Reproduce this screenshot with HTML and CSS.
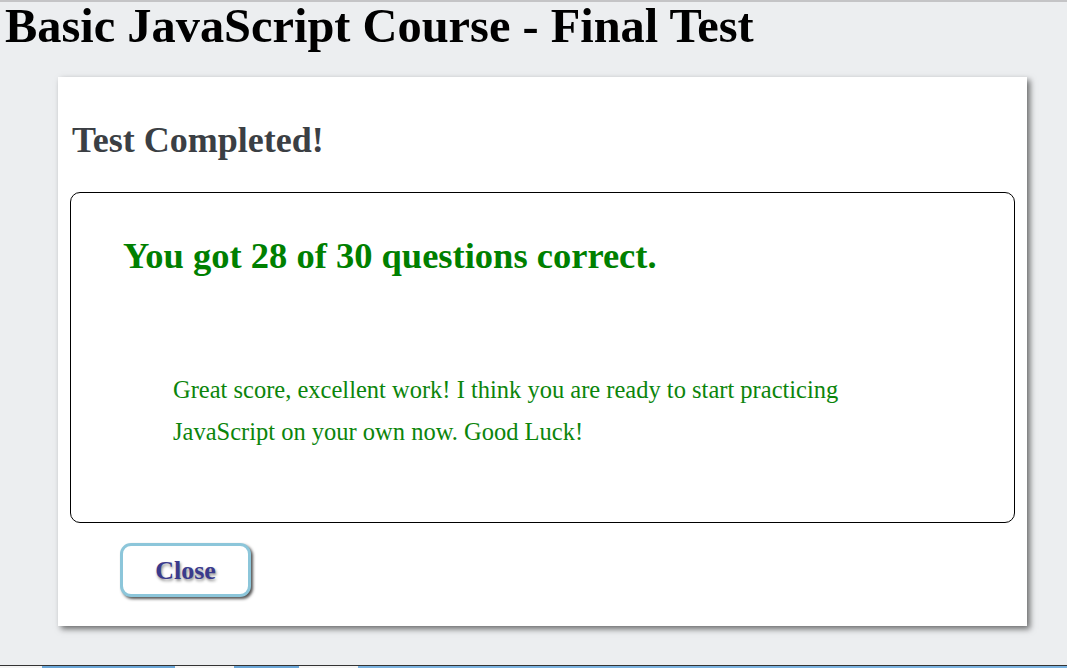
FILE: index.html
```html
<!DOCTYPE html>
<html>
<head>
<meta charset="utf-8">
<link rel="stylesheet" href="styles.css">
</head>
<body>
<div class="page">
  <h1 class="title">Basic JavaScript Course - Final Test</h1>
  <div class="card">
    <h2 class="card-title">Test Completed!</h2>
    <div class="result-box">
      <h3 class="score">You got 28 of 30 questions correct.</h3>
      <p class="message">Great score, excellent work! I think you are ready to start practicing JavaScript on your own now. Good Luck!</p>
    </div>
    <div class="actions">
      <button class="close-btn">Close</button>
    </div>
  </div>
</div>
<div class="taskbar">
  <span class="tb tb-a"></span><span class="tb tb-b"></span><span class="tb tb-c"></span><span class="tb tb-d"></span><span class="tb tb-e"></span><span class="tb tb-f"></span>
</div>
</body>
</html>
```
FILE: styles.css
```css
html, body {
  margin: 0;
  padding: 0;
}
body {
  background: #eceef0;
  font-family: "Liberation Serif", "Times New Roman", serif;
  height: 668px;
  display: flex;
  flex-direction: column;
  border-top: 2px solid #c4c4c6;
  box-sizing: border-box;
  overflow: hidden;
}
.page {
  flex: 1;
}
.title {
  margin: 0;
  padding: 0 0 0 5px;
  font-size: 48.4px;
  line-height: 48px;
  font-weight: bold;
  color: #000;
}
.card {
  margin: 27px 40px 0 58px;
  width: 969px;
  height: 549px;
  box-sizing: border-box;
  background: #fff;
  box-shadow: 3px 3px 6px rgba(0,0,0,0.55);
  padding: 43px 12px 0 12px;
}
.card-title {
  margin: 0 0 0 2px;
  font-size: 36px;
  line-height: 40px;
  color: #3b3f44;
}
.result-box {
  margin-top: 32px;
  border: 1px solid #000;
  border-radius: 10px;
  height: 331px;
  box-sizing: border-box;
  padding: 43px 0 0 52px;
}
.score {
  margin: 0;
  font-size: 36.5px;
  line-height: 40px;
  color: #008000;
}
.message {
  margin: 93px 0 0 50px;
  width: 700px;
  font-size: 24.5px;
  line-height: 42px;
  color: #0b850b;
}
.actions {
  padding: 20px 0 0 50px;
}
.close-btn {
  width: 131px;
  height: 54px;
  box-sizing: border-box;
  background: #fff;
  border: 3px solid #8cc6da;
  border-radius: 11px;
  box-shadow: 2px 2px 3px #555;
  font-family: "Liberation Serif", "Times New Roman", serif;
  font-size: 26px;
  font-weight: bold;
  color: #3a3a8c;
  text-shadow: 1px 2px 3px #888;
  padding: 2px 0 0 0;
}
.taskbar {
  height: 3px;
  display: flex;
}
.tb { height: 3px; border-top: 1px solid #333; box-sizing: border-box; }
.tb-a { width: 42px; background: #f4f4f4; }
.tb-b { width: 133px; background: #6aa6d8; }
.tb-c { width: 59px; background: #f4f4f4; }
.tb-d { width: 65px; background: #6aa6d8; }
.tb-e { width: 59px; background: #f4f4f4; }
.tb-f { flex: 1; background: #7ab2e0; }
```
